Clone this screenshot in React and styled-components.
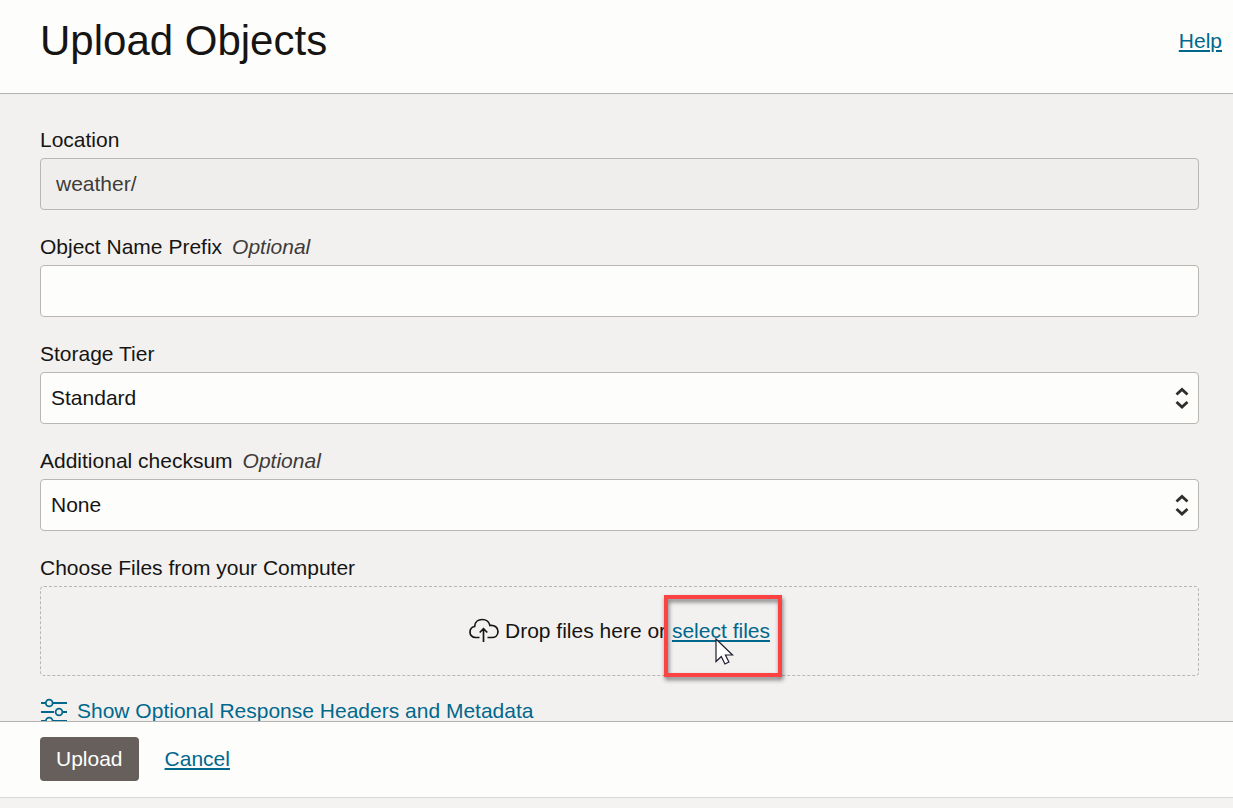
import React from "react";
import styled, { createGlobalStyle } from "styled-components";

const GlobalStyle = createGlobalStyle`
  *, *::before, *::after { box-sizing: border-box; }
  body {
    margin: 0;
    background: #f4f3f1;
    color: #161513;
    font: 21px/24px "Liberation Sans", Arial, sans-serif;
  }
`;

const Panel = styled.div`
  display: flex;
  flex-direction: column;
  height: 100vh;
  padding-bottom: 10px;
`;

const Header = styled.header`
  display: flex;
  justify-content: space-between;
  align-items: center;
  padding: 16px 11px 28px 40px;
  background: #fdfdfc;
  border-bottom: 1px solid #b5b3af;
`;

const Title = styled.h1`
  margin: 0;
  font-size: 42px;
  line-height: 49px;
  font-weight: 400;
`;

const TextLink = styled.a`
  color: #00688c;
  text-decoration: underline;
  text-decoration-thickness: 2px;
  text-underline-offset: 2px;
`;

const Content = styled.main`
  flex: 1;
  min-height: 0;
  overflow-y: auto;
  scrollbar-width: none;
  padding: 34px 34px 24px 40px;
  background: #f3f1f0;
`;

const Form = styled.form`
  display: flex;
  flex-direction: column;
  gap: 25px;
`;

const Field = styled.div`
  display: flex;
  flex-direction: column;
  gap: 6px;
`;

const Label = styled.label`
  display: flex;
  gap: 10px;
`;

const Optional = styled.em`
  color: #3f3b38;
`;

const TextInput = styled.input`
  width: 100%;
  height: 52px;
  padding: 0 15px;
  border: 1px solid #bab6b1;
  border-radius: 4px;
  background: #fdfdfc;
  color: #161513;
  font: inherit;

  &:disabled {
    background: #efeeec;
    color: #403c39;
    opacity: 1;
  }
`;

const SelectWrap = styled.div`
  display: grid;
  align-items: center;

  > * { grid-area: 1 / 1; }
  > svg { justify-self: end; margin-right: 9px; pointer-events: none; }
`;

const Select = styled.select`
  appearance: none;
  width: 100%;
  height: 52px;
  padding: 0 40px 0 10px;
  border: 1px solid #bab6b1;
  border-radius: 4px;
  background: #fdfdfc;
  color: #161513;
  font: inherit;
`;

const DropZone = styled.div`
  display: flex;
  justify-content: center;
  align-items: center;
  gap: 6px;
  height: 90px;
  border: 1px dashed #b9b5b0;
  border-radius: 4px;
`;

const Callout = styled.span`
  position: relative;
`;

const Highlight = styled.span`
  position: absolute;
  inset: -24px -12px -35px -8px;
  border: 4px solid #fc4343;
  filter: drop-shadow(1px 3px 2px rgba(0, 0, 0, 0.5));
  pointer-events: none;
`;

const Pointer = styled.svg`
  position: absolute;
  left: 43px;
  top: 19px;
  pointer-events: none;
`;

const HeadersLink = styled.a`
  display: flex;
  align-items: center;
  gap: 9px;
  margin-top: 21px;
  color: #00688c;
  text-decoration: none;
`;

const Footer = styled.footer`
  display: flex;
  align-items: center;
  gap: 26px;
  padding: 15px 40px 16px;
  background: #fdfdfc;
  border-top: 1px solid #b5b3af;
  border-bottom: 1px solid #d9d7d5;
`;

const UploadButton = styled.button`
  height: 44px;
  padding: 0 16px;
  border: 0;
  border-radius: 4px;
  background: #665f5b;
  color: #fff;
  font: inherit;
`;

const UpDownIcon = () => (
  <svg width="16" height="24" viewBox="0 0 16 24" fill="none" stroke="#312d2a" strokeWidth="2.8" aria-hidden="true">
    <path d="M2.5 8.500 8 3.500l5.500 5M2.500 16 8 21l5.500-5" />
  </svg>
);

const CloudIcon = () => (
  <svg width="30" height="26" viewBox="0 0 30 26" fill="none" stroke="#161513" strokeWidth="1.7" aria-hidden="true">
    <path d="M10.500 19.500H6.500C3.200 19.500 1 17 1 14.200c0-3 2-5.200 4.600-5.700C5.800 4.300 9 1.500 13.200 1.500c3.900 0 6.900 2.300 7.800 6 4.600-.6 8 2 8 5.900 0 3.600-2.600 6.100-6 6.100h-4.500M14.500 24V11M10.700 14.500l3.800-3.800 3.800 3.800" />
  </svg>
);

const SlidersIcon = () => (
  <svg width="28" height="28" viewBox="0 0 28 28" fill="none" stroke="#00688c" strokeWidth="1.800" aria-hidden="true">
    <path d="M1 6h4.500M13 6h14M1 15h13M23 15h4M1 24h4.500M13 24h14" />
    <circle cx="9.200" cy="6" r="3.400" />
    <circle cx="19" cy="15" r="3.400" />
    <circle cx="9.200" cy="24" r="3.400" />
  </svg>
);

function SelectField({ id, label, optional, options }) {
  return (
    <Field>
      <Label htmlFor={id}>
        {label}
        {optional && <Optional>Optional</Optional>}
      </Label>
      <SelectWrap>
        <Select id={id}>
          {options.map((option) => (
            <option key={option}>{option}</option>
          ))}
        </Select>
        <UpDownIcon />
      </SelectWrap>
    </Field>
  );
}

export default function App() {
  return (
    <>
      <GlobalStyle />
      <Panel>
        <Header>
          <Title>Upload Objects</Title>
          <TextLink href="#help">Help</TextLink>
        </Header>
        <Content>
          <Form id="upload-form">
            <Field>
              <Label htmlFor="location">Location</Label>
              <TextInput id="location" defaultValue="weather/" disabled />
            </Field>
            <Field>
              <Label htmlFor="prefix">
                Object Name Prefix
                <Optional>Optional</Optional>
              </Label>
              <TextInput id="prefix" />
            </Field>
            <SelectField id="tier" label="Storage Tier" options={["Standard"]} />
            <SelectField id="checksum" label="Additional checksum" optional options={["None"]} />
            <Field role="group" aria-labelledby="files-label">
              <Label as="span" id="files-label">Choose Files from your Computer</Label>
              <DropZone>
                <CloudIcon />
                <span>
                  Drop files here or{" "}
                  <Callout>
                    <TextLink href="#files">select files</TextLink>
                    <Highlight />
                    <Pointer width="20" height="28" viewBox="0 0 20 28" aria-hidden="true">
                      <path d="M1 1v22.500l5.300-5 3.600 7.500 4-2-3.500-7h7.100z" fill="#fff" stroke="#1c1b2e" strokeWidth="1.200" />
                    </Pointer>
                  </Callout>
                </span>
              </DropZone>
            </Field>
          </Form>
          <HeadersLink href="#headers">
            <SlidersIcon />
            Show Optional Response Headers and Metadata
          </HeadersLink>
        </Content>
        <Footer>
          <UploadButton type="submit" form="upload-form">Upload</UploadButton>
          <TextLink href="#cancel">Cancel</TextLink>
        </Footer>
      </Panel>
    </>
  );
}
